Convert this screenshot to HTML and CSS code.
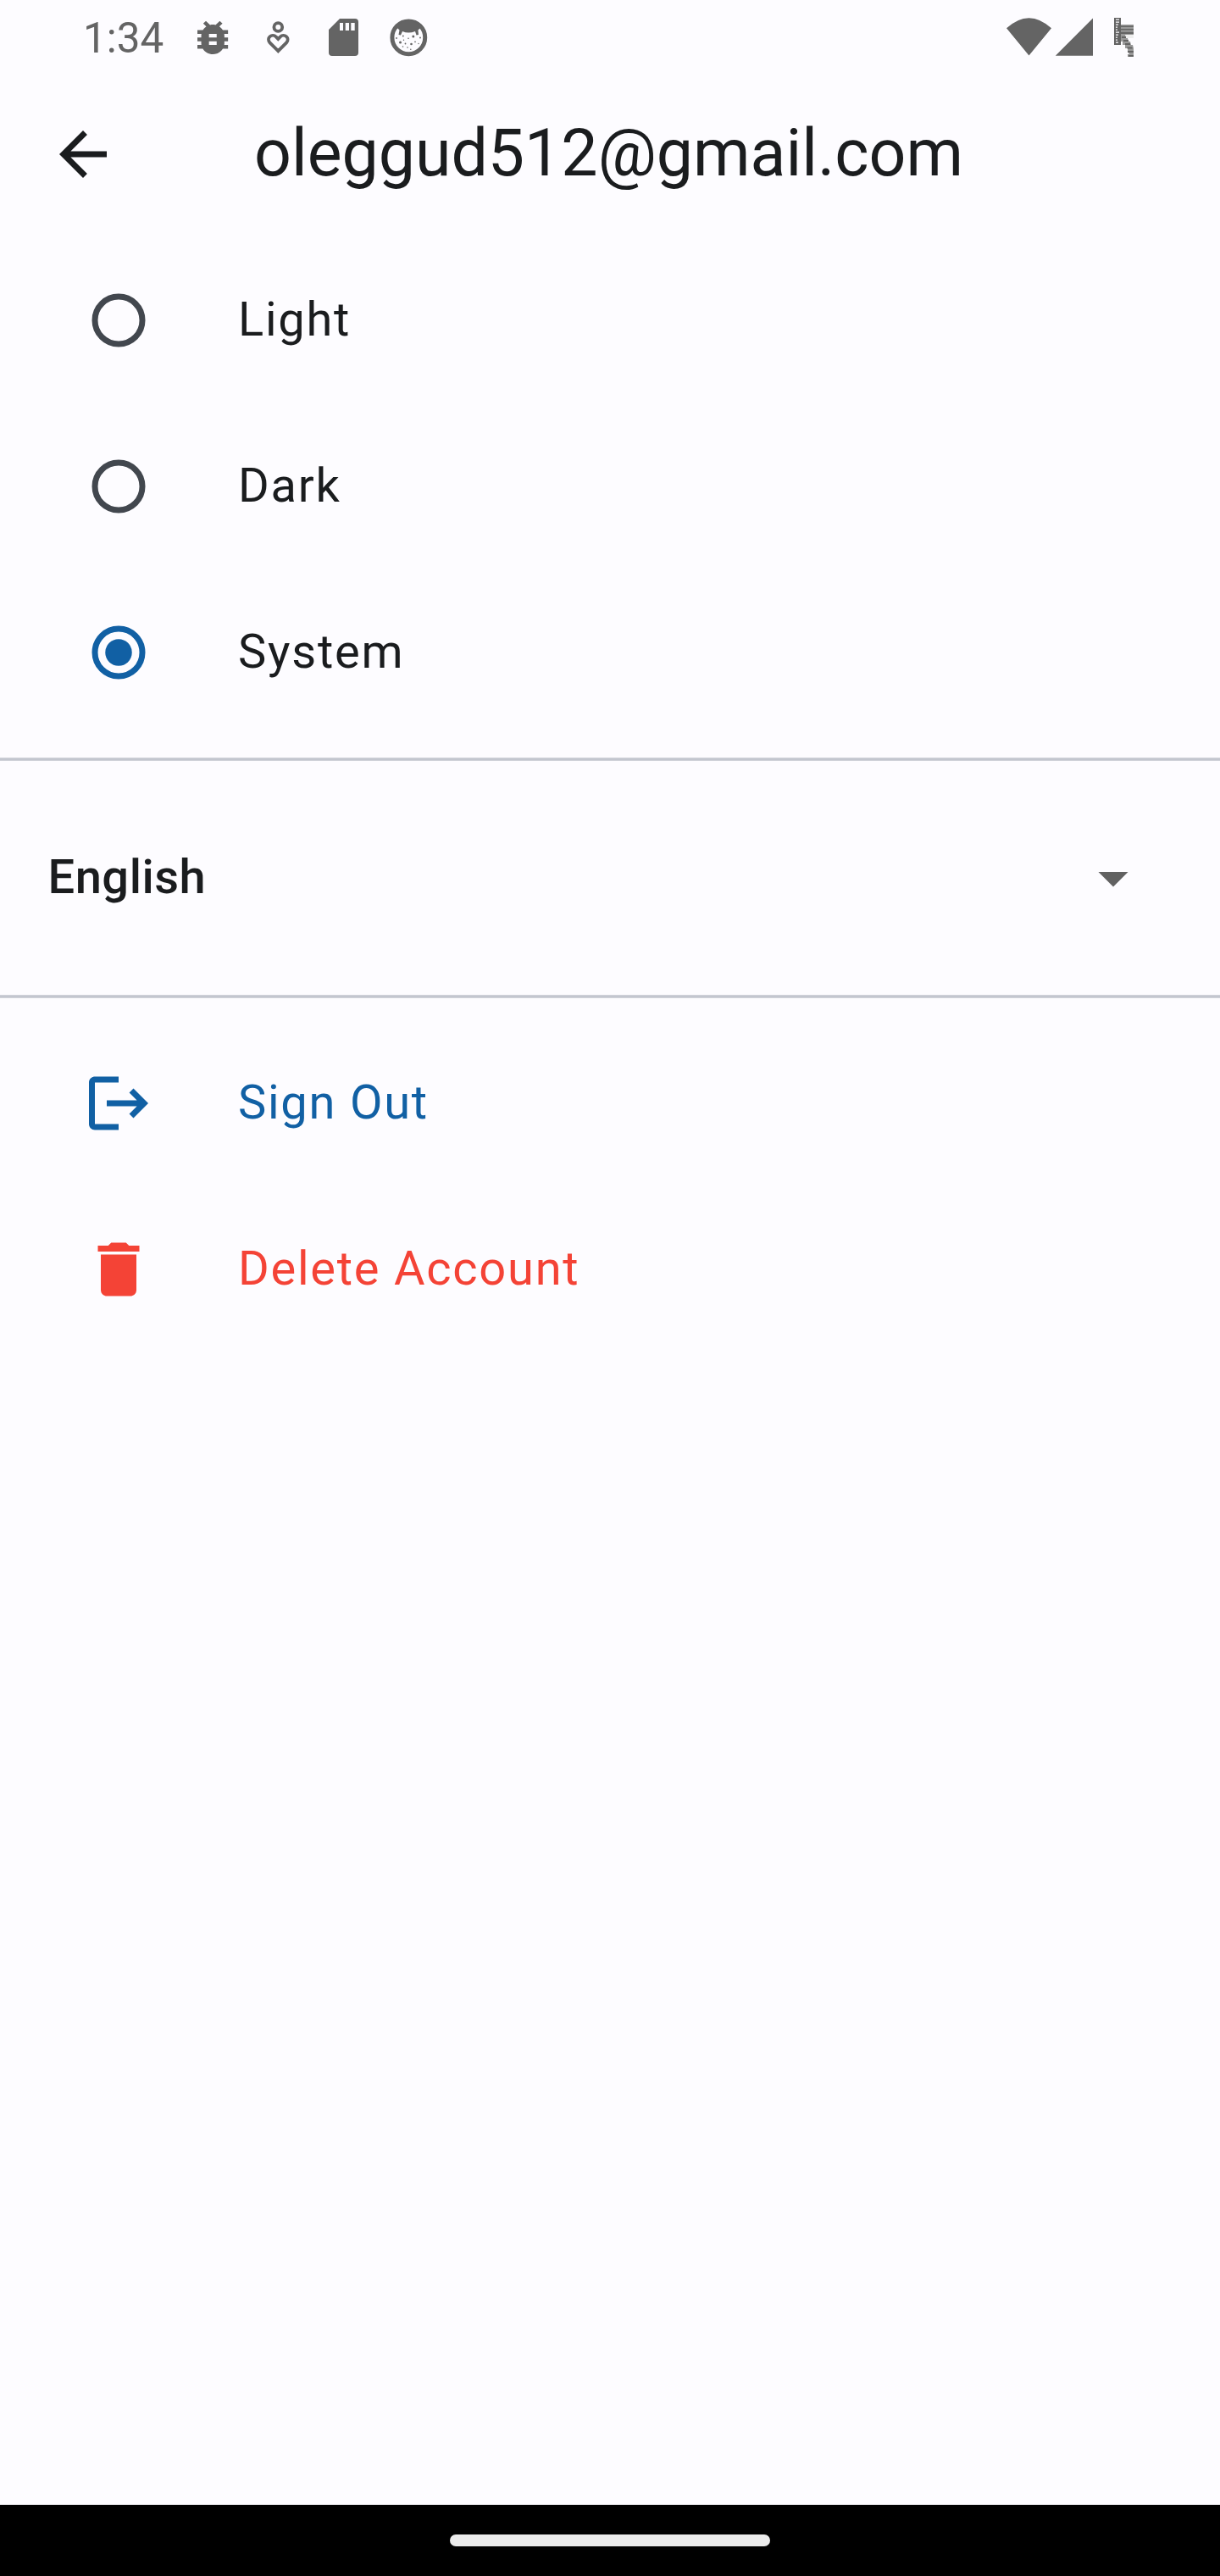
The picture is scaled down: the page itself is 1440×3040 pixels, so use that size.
FILE: index.html
```html
<!DOCTYPE html>
<html lang="en">
<head>
<meta charset="utf-8">
<title>Account settings</title>
<link rel="stylesheet" href="styles.css">
</head>
<body>
<div class="screen">
  <header class="status">
    <span class="time">1:34</span>
    <svg class="status-icons" width="300" height="84" viewBox="220 0 300 84">
      <svg x="233" y="24.7" width="36.4" height="39.3" viewBox="4 3 16 18" preserveAspectRatio="none"><path d="M20 8h-2.81c-.45-.78-1.07-1.45-1.82-1.96L17 4.41 15.59 3l-2.17 2.17C12.96 5.06 12.49 5 12 5s-.96.06-1.41.17L8.41 3 7 4.41l1.62 1.63C7.88 6.55 7.26 7.22 6.81 8H4v2h2.09c-.05.33-.09.66-.09 1v1H4v2h2v1c0 .34.04.67.09 1H4v2h2.81c1.04 1.79 2.97 3 5.19 3s4.15-1.21 5.19-3H20v-2h-2.09c.05-.33.09-.66.09-1v-1h2v-2h-2v-1c0-.34-.04-.67-.09-1H20V8zm-6 8h-4v-2h4v2zm0-4h-4v-2h4v2z"/></svg>
      <g class="line"><circle cx="328.3" cy="32" r="4.9"/><path d="M328.3 60.2L318.5 50.4C313.8 45 321 38.7 326 43.6L328.3 46L330.6 43.6C335.6 38.7 342.8 45 338.1 50.4Z"/></g>
      <path fill-rule="evenodd" d="M401 22h18q4 0 4 4v36q0 4-4 4h-27q-4 0-4-4V35zM401 27v9h4v-9zM407.7 27v9h4.3v-9zM414.3 27v9h4.4v-9z"/>
      <circle class="ring" cx="482.3" cy="44.3" r="19.4"/>
      <path d="M467 31Q482 18 498 31L493.5 35.5 494 41 491.5 41.5 490 37Q482 40 475 37L473 41.5 470.5 41 471.5 35.5z"/>
      <g><circle cx="472.5" cy="50" r="1.5"/><circle cx="487.8" cy="43" r="1.5"/><circle cx="485.5" cy="52" r="1.3"/><circle cx="478.5" cy="51.5" r=".9"/><circle cx="475.8" cy="42.5" r=".9"/><circle cx="481" cy="56" r=".8"/><circle cx="484.8" cy="58.2" r=".8"/><circle cx="490" cy="49.4" r=".8"/><circle cx="494" cy="51.5" r=".7"/><circle cx="468" cy="45" r=".9"/><circle cx="482" cy="45.3" r=".8"/><circle cx="496" cy="44.5" r=".9"/><circle cx="475.5" cy="55" r=".8"/><circle cx="476.5" cy="47.2" r=".7"/></g>
    </svg>
    <svg class="status-system" width="160" height="84" viewBox="1180 0 160 84">
      <path d="M1188 33.3Q1214.5 9 1241 33.3L1214.5 65.5zM1290 21.5V65.7H1245.8z"/>
      <path d="M1315 21h8v32h-8z"/>
      <path class="hatch" d="M1317 23.2h4M1317 26.2h4M1317 29.2h3M1317 32.2h2M1317 35.2h2M1317 38.2h4M1317 41.2h3M1317 44.2h2M1317 47.2h2M1317 50.2h3"/>
      <path class="pale" d="M1323 29h15v12h-15z"/>
      <path d="M1323 30.5h15v1.5h-15zM1323 34h15v1.4h-15zM1323 37.8h15v2.2h-15z"/>
      <path class="faint" d="M1328 41h10v4h-10z"/>
      <path class="pale" d="M1323 41h5l1 4h2l1 4h2l1 4h2l1 4v10h-7v-3h2l-2-3v-4h-3v-4h-3v-4h-2z"/>
      <path d="M1324 43h5v2h-5zM1326 47h6v2h-6zM1328 51h6v2h-6zM1330.5 55.5h6v2h-6zM1331 60h7v2h-7zM1332 65h6v2h-6z"/>
    </svg>
  </header>

  <div class="appbar">
    <svg width="84" height="84" viewBox="0 0 24 24"><path d="M20 11H7.83l5.59-5.59L12 4l-8 8 8 8 1.41-1.41L7.83 13H20v-2z"/></svg>
    <h1 class="title">oleggud512@gmail.com</h1>
  </div>

  <main class="content">
    <label class="row"><svg class="radio" width="84" height="84" viewBox="0 0 84 84"><circle cx="42" cy="42" r="28"/></svg><span>Light</span></label>
    <label class="row"><svg class="radio" width="84" height="84" viewBox="0 0 84 84"><circle cx="42" cy="42" r="28"/></svg><span>Dark</span></label>
    <label class="row"><svg class="radio selected" width="84" height="84" viewBox="0 0 84 84"><circle cx="42" cy="42" r="28"/><circle class="dot" cx="42" cy="42" r="15.75"/></svg><span>System</span></label>
    <div class="divider"></div>
    <div class="language">
      <span>English</span>
      <svg width="84" height="84" viewBox="0 0 24 24"><path d="M7 10l5 5 5-5z"/></svg>
    </div>
    <div class="divider"></div>
    <div class="row signout">
      <svg width="84" height="84" viewBox="0 0 24 24"><path d="M17 7l-1.41 1.41L18.17 11H8v2h10.17l-2.58 2.58L17 17l5-5zM4 5h8V3H4c-1.1 0-2 .9-2 2v14c0 1.1.9 2 2 2h8v-2H4V5z"/></svg>
      <span>Sign Out</span>
    </div>
    <div class="row delete">
      <svg width="84" height="84" viewBox="0 0 24 24"><path d="M6 19c0 1.1.9 2 2 2h8c1.1 0 2-.9 2-2V7H6v12zM19 4h-3.5l-1-1h-5l-1 1H5v2h14V4z"/></svg>
      <span>Delete Account</span>
    </div>
  </main>

  <footer class="navbar"><div class="handle"></div></footer>
</div>
</body>
</html>
```
FILE: styles.css
```css
*, *::before { box-sizing: border-box; }
body {
  margin: 0;
  font-family: Roboto, sans-serif;
  color: #1a1c1e;
  background: #fdfcff;
}
svg { display: block; flex: none; }
.screen {
  width: 1440px;
  height: 3040px;
  display: flex;
  flex-direction: column;
  background: #fdfcff;
}
.status {
  height: 84px;
  display: flex;
  color: #646464;
  fill: #646464;
}
.time {
  width: 122px;
  margin-left: 98px;
  font-size: 49.4px;
  line-height: 91px;
}
.status-system { margin-left: 660px; }
.line, .ring { fill: none; stroke: #646464; stroke-width: 3.8; }
.ring { stroke-width: 5; }
.hatch { stroke: #fdfcff; stroke-width: 1.3; }
.pale { fill: #999; }
.faint { fill: #eee; }
.appbar {
  height: 196px;
  display: flex;
  align-items: center;
  padding-left: 56px;
}
.appbar svg { fill: #1a1c1e; }
.title {
  margin: 0 0 0 160px;
  padding-bottom: 2px;
  font-size: 77px;
  font-weight: 400;
  line-height: 98px;
}
.content { flex: 1; }
.row {
  height: 196px;
  display: flex;
  align-items: center;
  gap: 99px;
  padding-left: 98px;
  font-size: 56px;
  letter-spacing: 1.75px;
}
.row span, .language span { padding-bottom: 2px; line-height: 84px; }
.radio { fill: none; stroke: #42474e; stroke-width: 7; }
.selected { stroke: #1160a4; }
.dot { fill: #1160a4; stroke: none; }
.divider {
  height: 56px;
  display: flex;
  align-items: center;
}
.divider::before {
  content: "";
  width: 100%;
  height: 4px;
  background: #c3c6cf;
  border-top: 1px solid #d0d2d9;
  border-bottom: 1px solid #d0d2d9;
}
.language {
  height: 224px;
  display: flex;
  align-items: center;
  justify-content: space-between;
  padding: 0 84px 0 56.5px;
  font-size: 56px;
  font-weight: 500;
  letter-spacing: 0.525px;
}
.language svg { fill: #616161; }
.signout { color: #1160a4; fill: #1160a4; }
.delete { color: #f44336; fill: #f44336; }
.navbar {
  height: 84px;
  display: flex;
  justify-content: center;
  align-items: center;
  background: #000;
}
.handle {
  width: 378px;
  height: 14px;
  border-radius: 7px;
  background: #ebebeb;
}
```
